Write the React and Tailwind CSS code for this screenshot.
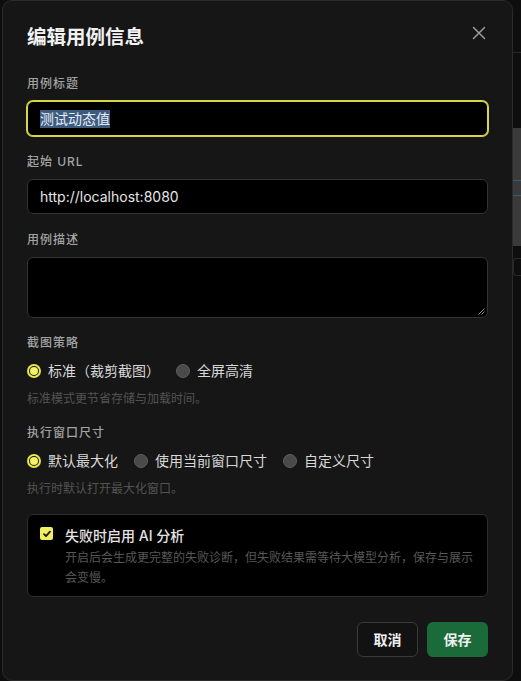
import React from "react"

const font = { fontFamily: "Inter, 'Noto Sans CJK SC', 'Noto Sans', sans-serif" }

function Label({ children }) {
  return (
    <div className="text-[12px] leading-[18px] tracking-[1px] text-[#a3a3a3] font-medium">
      {children}
    </div>
  )
}

function Hint({ children }) {
  return <div className="text-[12px] leading-[18px] text-[#535353]">{children}</div>
}

function Radio({ checked, label }) {
  return (
    <label className="flex items-center gap-[7px] h-5">
      {checked ? (
        <span className="w-[14px] h-[14px] rounded-full border-2 border-[#e8e84c] flex items-center justify-center">
          <span className="w-[8px] h-[8px] rounded-full bg-[#f4f46a]" />
        </span>
      ) : (
        <span className="w-[14px] h-[14px] rounded-full bg-[#4a4a4a] border border-[#5e5e5e]" />
      )}
      <span className="text-[14px] leading-5 text-[#d8d8d8]">{label}</span>
    </label>
  )
}

// strip of the page that peeks out behind the dialog
function PageEdge() {
  return (
    <div className="w-[8px] flex flex-col bg-[#0e0e0e]">
      <div className="h-[52px]" />
      <div className="h-px bg-[#2a2a2a]" />
      <div className="h-[75px]" />
      <div className="h-[118px] bg-[#3a3a3a] flex flex-col">
        <div className="h-[52px]" />
        <div className="h-px bg-[#3d5a6e]" />
        <div className="h-[14px]" />
        <div className="h-px bg-[#3d5a6e]" />
      </div>
      <div className="h-[12px]" />
      <div className="h-[18px] border border-r-0 border-[#2a2a2a] rounded-l-sm" />
    </div>
  )
}

export default function App() {
  return (
    <div className="w-[521px] h-[681px] bg-[#0e0e0e] flex overflow-hidden" style={font}>
      <div className="w-[2px]" />
      <div className="w-[512px] h-[681px] bg-[#161616] border border-[#2b2b2b] rounded-[10px] px-[24px] pt-[22px] flex flex-col relative">
        <button className="absolute right-[25px] top-[24px] text-[#9c9c9c]">
          <svg width="16" height="16" viewBox="0 0 16 16" fill="none" stroke="currentColor" strokeWidth="1.5" strokeLinecap="round">
            <path d="M2.5 2.5l11 11M13.5 2.5l-11 11" />
          </svg>
        </button>

        <h2 className="text-[19.5px] leading-[28px] font-bold text-[#f2f2f2]">编辑用例信息</h2>

        <div className="mt-6">
          <Label>用例标题</Label>
        </div>
        <div className="mt-2 h-[35px] rounded-[6px] bg-black border border-[#d6d646] ring-1 ring-[#d6d646] flex items-center px-[12px]">
          <span className="text-[14px] leading-[18px] bg-[#3d5b80] text-[#e8eef6]">测试动态值</span>
        </div>

        <div className="mt-[17px]">
          <Label>起始 URL</Label>
        </div>
        <div className="mt-2 h-[35px] rounded-[6px] bg-black border border-[#333] flex items-center px-[12px]">
          <span className="text-[14px] text-[#e6e6e6]">http://localhost:8080</span>
        </div>

        <div className="mt-[17px]">
          <Label>用例描述</Label>
        </div>
        <div className="mt-2 h-[61px] rounded-[6px] bg-black border border-[#333] relative">
          <svg className="absolute right-[2px] bottom-[2px]" width="7" height="7" viewBox="0 0 7 7" stroke="#8a8a8a" strokeWidth="1">
            <path d="M6.5 0.5L0.5 6.5M6.5 3.5L3.5 6.5" />
          </svg>
        </div>

        <div className="mt-4">
          <Label>截图策略</Label>
        </div>
        <div className="mt-[9px] flex gap-4">
          <Radio checked label="标准（裁剪截图）" />
          <Radio label="全屏高清" />
        </div>
        <div className="mt-[9px]">
          <Hint>标准模式更节省存储与加载时间。</Hint>
        </div>

        <div className="mt-4">
          <Label>执行窗口尺寸</Label>
        </div>
        <div className="mt-[9px] flex gap-4">
          <Radio checked label="默认最大化" />
          <Radio label="使用当前窗口尺寸" />
          <Radio label="自定义尺寸" />
        </div>
        <div className="mt-[9px]">
          <Hint>执行时默认打开最大化窗口。</Hint>
        </div>

        <div className="mt-4 rounded-[6px] bg-black border border-[#2e2e2e] pl-[12px] pr-[12px] pt-[11px] pb-[8px] flex gap-[12px]">
          <span className="mt-[1px] w-[13px] h-[13px] shrink-0 rounded-[2px] bg-[#f0f05e] flex items-center justify-center">
            <svg width="10" height="10" viewBox="0 0 10 10" fill="none" stroke="#1a1a1a" strokeWidth="1.8" strokeLinecap="round" strokeLinejoin="round">
              <path d="M2 5.2l2 2L8 2.6" />
            </svg>
          </span>
          <div className="flex flex-col">
            <div className="text-[14px] leading-5 font-medium text-[#e4e4e4]">失败时启用 AI 分析</div>
            <div className="mt-[2px] text-[12px] leading-5 text-[#585858]">
              开启后会生成更完整的失败诊断，但失败结果需等待大模型分析，保存与展示会变慢。
            </div>
          </div>
        </div>

        <div className="mt-[25px] flex justify-end gap-[9px]">
          <button className="w-[61px] h-[35px] rounded-[6px] bg-[#121212] border border-[#3a3a3a] text-[14px] font-bold text-[#f0f0f0]">
            取消
          </button>
          <button className="w-[61px] h-[35px] rounded-[6px] bg-[#1b6a39] text-[14px] font-bold text-[#f0f0f0]">
            保存
          </button>
        </div>
      </div>
      <PageEdge />
    </div>
  )
}
